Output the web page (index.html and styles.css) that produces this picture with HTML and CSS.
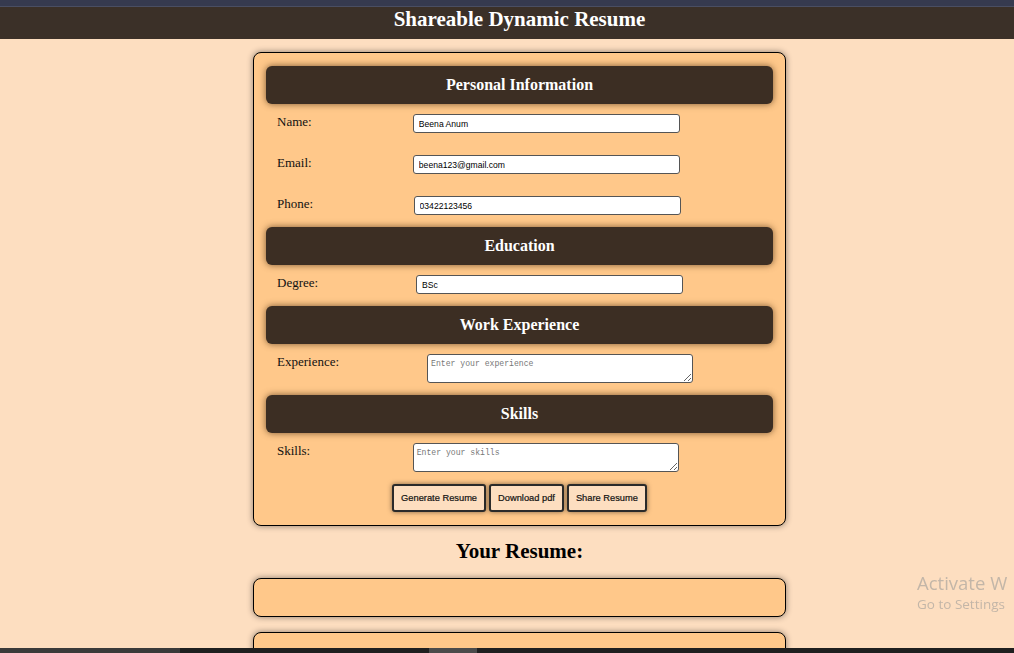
FILE: index.html
```html
<!DOCTYPE html>
<html lang="en">
<head>
<meta charset="utf-8">
<title>Shareable Dynamic Resume</title>
<link rel="stylesheet" href="styles.css">
</head>
<body>
<div class="chrome-top"></div>
<header class="topbar">
  <h1 class="topbar-title">Shareable Dynamic Resume</h1>
</header>
<main class="page">
  <form class="card">
    <section class="section">
      <h2 class="section-title">Personal Information</h2>
      <div class="row"><label class="label">Name:</label><input class="field" type="text" value="Beena Anum"></div>
      <div class="row"><label class="label">Email:</label><input class="field" type="text" value="beena123@gmail.com"></div>
      <div class="row"><label class="label">Phone:</label><input class="field" type="text" value="03422123456"></div>
    </section>
    <section class="section">
      <h2 class="section-title">Education</h2>
      <div class="row"><label class="label">Degree:</label><input class="field" type="text" value="BSc"></div>
    </section>
    <section class="section">
      <h2 class="section-title">Work Experience</h2>
      <div class="row"><label class="label">Experience:</label><textarea class="area" placeholder="Enter your experience"></textarea></div>
    </section>
    <section class="section">
      <h2 class="section-title">Skills</h2>
      <div class="row"><label class="label">Skills:</label><textarea class="area" placeholder="Enter your skills"></textarea></div>
    </section>
    <div class="actions">
      <button class="btn" type="button">Generate Resume</button>
      <button class="btn" type="button">Download pdf</button>
      <button class="btn" type="button">Share Resume</button>
    </div>
  </form>
  <h2 class="resume-title">Your Resume:</h2>
  <div class="resume-box"></div>
  <div class="resume-box"></div>
</main>
<div class="watermark">
  <div class="watermark-big">Activate W</div>
  <div class="watermark-small">Go to Settings</div>
</div>
<div class="taskbar">
  <div class="taskbar-left"></div>
  <div class="taskbar-gap"></div>
  <div class="taskbar-thumb"></div>
</div>
</body>
</html>
```
FILE: styles.css
```css
html {
  scrollbar-width: none;
}
html::-webkit-scrollbar {
  display: none;
}
body {
  margin: 0;
  background: #fddec0;
  font-family: "Liberation Serif", "Times New Roman", serif;
  color: #000;
}
.chrome-top {
  height: 6px;
  background: #363a4f;
  border-bottom: 1px solid #4a4e62;
}
.topbar {
  background: #3b3028;
  padding: 0 0 8px 25px;
  text-align: center;
}
.topbar-title {
  margin: 0;
  font-size: 21px;
  line-height: 24px;
  font-weight: bold;
  color: #fff;
}
.page {
  padding-left: 25px;
}
.card {
  box-sizing: border-box;
  width: 533px;
  margin: 13px auto 0;
  padding: 13px 12px;
  background: #ffc88a;
  border: 1px solid #000;
  border-radius: 8px;
  box-shadow: 0 0 6px rgba(0, 0, 0, 0.45);
}
.section-title {
  margin: 0 0 10px;
  padding: 10px 0;
  line-height: 18px;
  font-size: 16px;
  font-weight: bold;
  text-align: center;
  color: #fff;
  background: #3c2e23;
  border-radius: 6px;
  box-shadow: 0 0 7px rgba(80, 50, 20, 0.75);
}
.row {
  display: flex;
  align-items: flex-start;
  padding-left: 11px;
  margin-right: -8px;
  margin-bottom: 22px;
}
.row:last-child {
  margin-bottom: 12px;
}
.label {
  font-size: 13px;
  line-height: 15px;
  color: #111;
}
.field {
  box-sizing: border-box;
  width: 267px;
  height: 19px;
  margin: 0 auto;
  padding: 0 5px;
  border: 1px solid #555;
  border-radius: 3px;
  background: #fff;
  font-family: "Liberation Sans", Arial, sans-serif;
  font-size: 8.6px;
  color: #000;
}
.area {
  box-sizing: border-box;
  width: 266px;
  height: 29px;
  margin: 0 auto;
  padding: 4px 3px;
  border: 1px solid #555;
  border-radius: 3px;
  background: #fff;
  font-family: "Liberation Mono", "Courier New", monospace;
  font-size: 8.15px;
  line-height: 9px;
  display: block;
}
.area::placeholder {
  color: #777;
}
.actions {
  display: flex;
  justify-content: center;
  gap: 3px;
}
.btn {
  height: 28px;
  padding: 0 7px;
  background: #fddec0;
  border: 2px solid #2a2a2a;
  border-radius: 3px;
  box-shadow: 0 0 5px rgba(0, 0, 0, 0.5);
  font-family: "Liberation Sans", Arial, sans-serif;
  font-size: 9.3px;
  color: #111;
  -webkit-text-stroke: 0.2px #111;
}
.resume-title {
  margin: 13px 0 15px;
  font-size: 21px;
  line-height: 24px;
  font-weight: bold;
  text-align: center;
  color: #000;
}
.resume-box {
  box-sizing: border-box;
  width: 533px;
  height: 39px;
  margin: 0 auto 15px;
  background: #ffc88a;
  border: 1px solid #000;
  border-radius: 8px;
  box-shadow: 0 0 6px rgba(0, 0, 0, 0.45);
}
.watermark {
  position: fixed;
  left: 917px;
  top: 571px;
  white-space: nowrap;
  font-family: "Open Sans", "Noto Sans", sans-serif;
  color: #c3b6a8;
}
.watermark-big {
  font-size: 18.5px;
  line-height: 24px;
}
.watermark-small {
  font-size: 13.5px;
  line-height: 18px;
}
.taskbar {
  position: fixed;
  left: 0;
  right: 0;
  bottom: 0;
  height: 5px;
  display: flex;
  background: #1f1f1f;
}
.taskbar-left {
  width: 180px;
  background: #3a3a3a;
}
.taskbar-gap {
  width: 249px;
}
.taskbar-thumb {
  width: 48px;
  background: #4b4b4b;
}
```
